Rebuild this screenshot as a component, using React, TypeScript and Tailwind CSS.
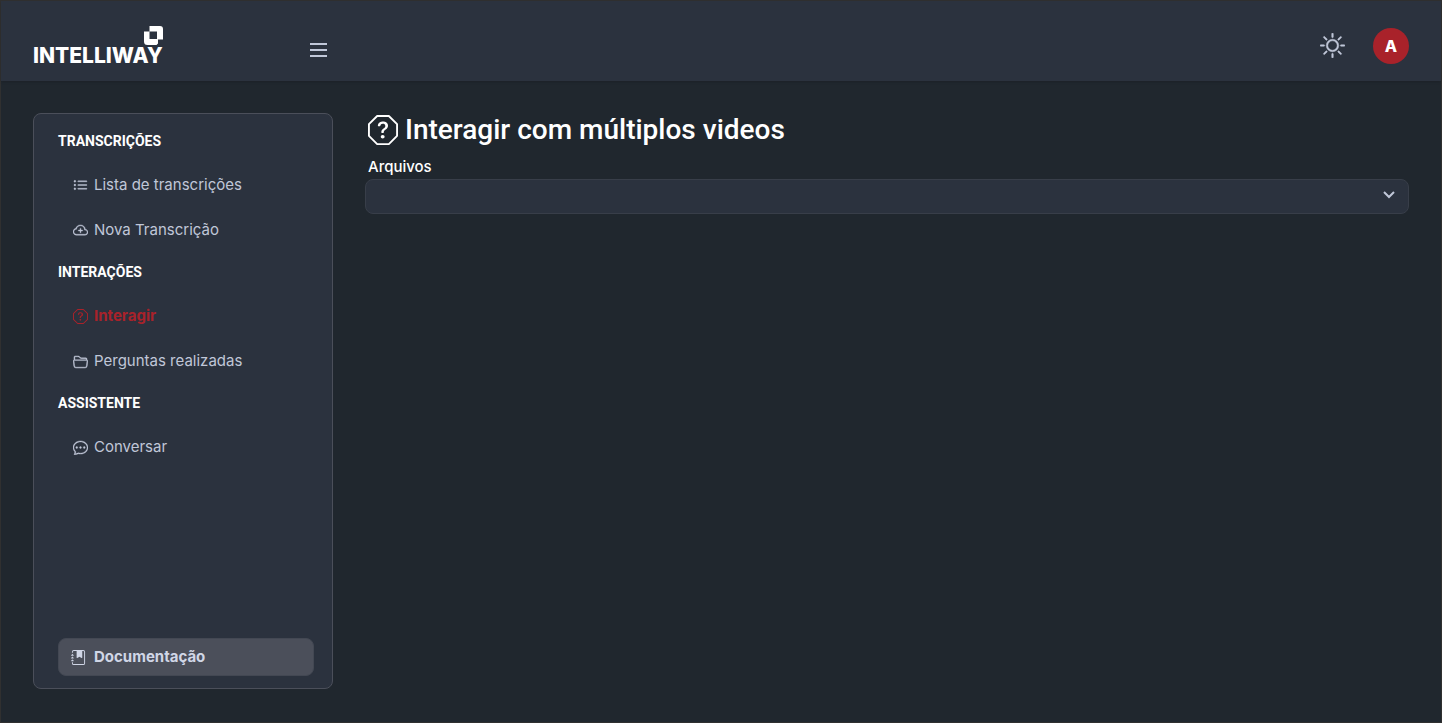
import { useState } from "react"
import type { IconType } from "react-icons"
import {
  BsChatDots,
  BsCloudPlus,
  BsFolder2Open,
  BsJournalBookmarkFill,
  BsListUl,
  BsQuestionOctagon,
  BsSun,
} from "react-icons/bs"

type Item = { nome: string; icone: IconType }

const menu: { titulo: string; itens: Item[] }[] = [
  {
    titulo: "TRANSCRIÇÕES",
    itens: [
      { nome: "Lista de transcrições", icone: BsListUl },
      { nome: "Nova Transcrição", icone: BsCloudPlus },
    ],
  },
  {
    titulo: "INTERAÇÕES",
    itens: [
      { nome: "Interagir", icone: BsQuestionOctagon },
      { nome: "Perguntas realizadas", icone: BsFolder2Open },
    ],
  },
  {
    titulo: "ASSISTENTE",
    itens: [{ nome: "Conversar", icone: BsChatDots }],
  },
]

function Logo() {
  return (
    <a href="#" className="flex flex-col items-end text-white">
      <svg width="19" height="19" viewBox="0 0 19 19" fill="currentColor" aria-hidden="true">
        <path
          fillRule="evenodd"
          d="M5.500 0H16a3 3 0 0 1 3 3V13.500h-5V17.500L12.500 19H3.500A3.500 3.500 0 0 1 0 15.500V5.500h5.500V0ZM5.500 5.500v7.500h7.500V5.500H5.500Z"
        />
      </svg>
      <span className="font-['Inter'] text-[21px] leading-[22px] font-extrabold">INTELLIWAY</span>
    </a>
  )
}

function Header({ onMenu }: { onMenu: () => void }) {
  return (
    <header className="flex h-20 items-start justify-between bg-[#2b323e] px-8 pt-[25px] shadow-sm">
      <div className="flex w-[294px] items-center justify-between">
        <Logo />
        <button type="button" aria-label="Menu" onClick={onMenu} className="pt-1.5 text-[#c0c7d8]">
          <svg width="17" height="14" viewBox="0 0 17 14" stroke="currentColor" strokeWidth="2">
            <path d="M0 1h17M0 7h17M0 13h17" />
          </svg>
        </button>
      </div>

      <div className="flex items-center gap-7 pt-0.5">
        <button type="button" aria-label="Alternar tema" className="pb-0.5 text-[#c0c7d8]">
          <BsSun size={25} className="stroke-[0.3]" />
        </button>
        <button
          type="button"
          className="h-9 w-9 rounded-full bg-[#a9222a] font-['Inter'] text-base font-extrabold text-white"
        >
          A
        </button>
      </div>
    </header>
  )
}

function Sidebar({ ativo, onSelect }: { ativo: string; onSelect: (nome: string) => void }) {
  return (
    <aside className="flex w-[300px] shrink-0 flex-col rounded-lg border border-[#4b4f5a] bg-[#2b323e] pt-4 pr-[18px] pb-3 pl-6">
      <nav className="flex flex-1 flex-col gap-2">
        {menu.map((grupo) => (
          <div key={grupo.titulo}>
            <h2 className="text-sm leading-[22px] font-bold text-white">{grupo.titulo}</h2>
            <ul className="pt-[11px]">
              {grupo.itens.map(({ nome, icone: Icone }) => (
                <li key={nome}>
                  <a
                    href="#"
                    onClick={() => onSelect(nome)}
                    className={`flex h-[45px] items-center gap-1.5 px-[15px] font-['Inter'] text-[15px] ${
                      nome === ativo ? "font-bold text-[#a9222a]" : "text-[#c0c7d8]"
                    }`}
                  >
                    <Icone size={15} className={nome === ativo ? "" : "stroke-[0.4]"} />
                    {nome}
                  </a>
                </li>
              ))}
            </ul>
          </div>
        ))}
      </nav>

      <a
        href="#"
        className="flex h-[38px] items-center gap-2 rounded-lg border border-[#434853] bg-[#4b4f5a] px-3 font-['Inter'] text-[15px] font-bold text-[#d0d6e6]"
      >
        <BsJournalBookmarkFill size={15} />
        Documentação
      </a>
    </aside>
  )
}

function App() {
  const [ativo, setAtivo] = useState("Interagir")
  const [menuAberto, setMenuAberto] = useState(true)

  return (
    <div className="flex min-h-screen flex-col border border-[#303030] bg-[#20272e] font-['Roboto',sans-serif]">
      <Header onMenu={() => setMenuAberto(!menuAberto)} />

      <div className="flex flex-1 gap-8 px-8 pt-8 pb-[33px]">
        {menuAberto && <Sidebar ativo={ativo} onSelect={setAtivo} />}

        <main className="min-w-0 flex-1">
          <h1 className="flex h-[34px] items-center gap-[7px] px-[3px] text-[28px] font-medium text-white">
            <BsQuestionOctagon size={30} />
            Interagir com múltiplos videos
          </h1>

          <label
            htmlFor="arquivos"
            className="mt-2.5 block px-[3px] font-['Inter'] text-[15px] leading-5 font-medium text-white"
          >
            Arquivos
          </label>
          <div className="relative mt-0.5">
            <select
              id="arquivos"
              className="block h-[35px] w-full appearance-none rounded-lg border border-[#383e49] bg-[#2b323e] px-3 text-sm text-[#c0c7d8] outline-none"
            >
              <option value=""></option>
            </select>
            <svg
              width="12"
              height="8"
              viewBox="0 0 12 8"
              fill="none"
              stroke="currentColor"
              strokeWidth="2"
              className="pointer-events-none absolute top-3 right-3.5 text-[#c0c7d8]"
              aria-hidden="true"
            >
              <path d="M1 1l5 5 5-5" />
            </svg>
          </div>
        </main>
      </div>
    </div>
  )
}

export default App
